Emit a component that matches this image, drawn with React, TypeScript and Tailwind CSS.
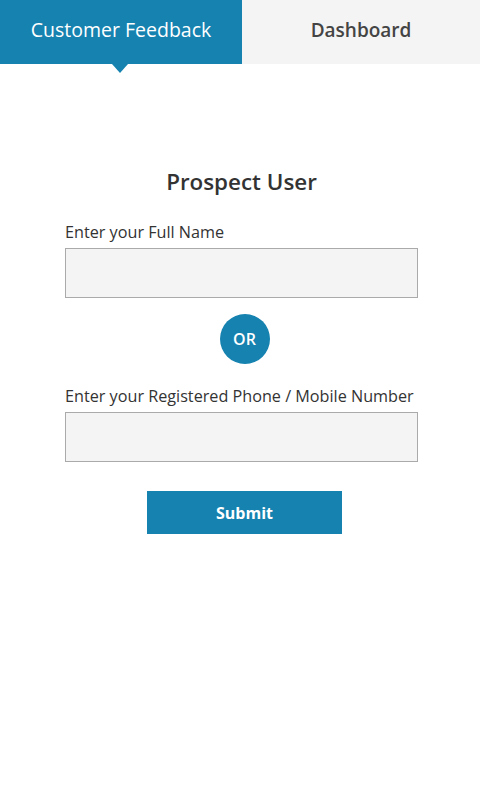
import React from "react";

export default function App() {
  return (
    <div className="w-[480px] h-[800px] bg-white" style={{ fontFamily: '"Open Sans", "Noto Sans", sans-serif' }}>
      <div className="flex h-[64px]">
        <div className="relative w-[242px] bg-[#1582b0] flex items-center justify-center pb-[4px] text-white text-[19.5px]">
          Customer Feedback
          <div className="absolute left-[112px] top-[64px] w-0 h-0 border-l-[8px] border-r-[8px] border-t-[9px] border-l-transparent border-r-transparent border-t-[#1582b0]" />
        </div>
        <div className="flex-1 bg-[#f4f4f4] flex items-center justify-center pb-[4px] text-[#444] text-[19px] font-semibold">
          Dashboard
        </div>
      </div>
      <div className="w-[353px] ml-[65px] flex flex-col pt-[103px]">
        <h1 className="text-center text-[22.4px] font-semibold text-[#333] leading-[30px]">Prospect User</h1>
        <label className="mt-[24px] text-[16.2px] text-[#333] leading-[22px] whitespace-nowrap">Enter your Full Name</label>
        <div className="mt-[5px] h-[50px] bg-[#f4f4f4] border border-[#aaa]" />
        <div className="self-center ml-[6px] mt-[16px] w-[50px] h-[50px] rounded-full bg-[#1582b0] text-white flex items-center justify-center text-[16px] font-semibold">
          OR
        </div>
        <label className="mt-[21px] text-[16.2px] text-[#333] leading-[22px] whitespace-nowrap">Enter your Registered Phone / Mobile Number</label>
        <div className="mt-[5px] h-[50px] bg-[#f4f4f4] border border-[#aaa]" />
        <button className="self-center ml-[6px] mt-[29px] w-[195px] h-[43px] bg-[#1582b0] text-white text-[16px] font-bold">
          Submit
        </button>
      </div>
    </div>
  );
}
